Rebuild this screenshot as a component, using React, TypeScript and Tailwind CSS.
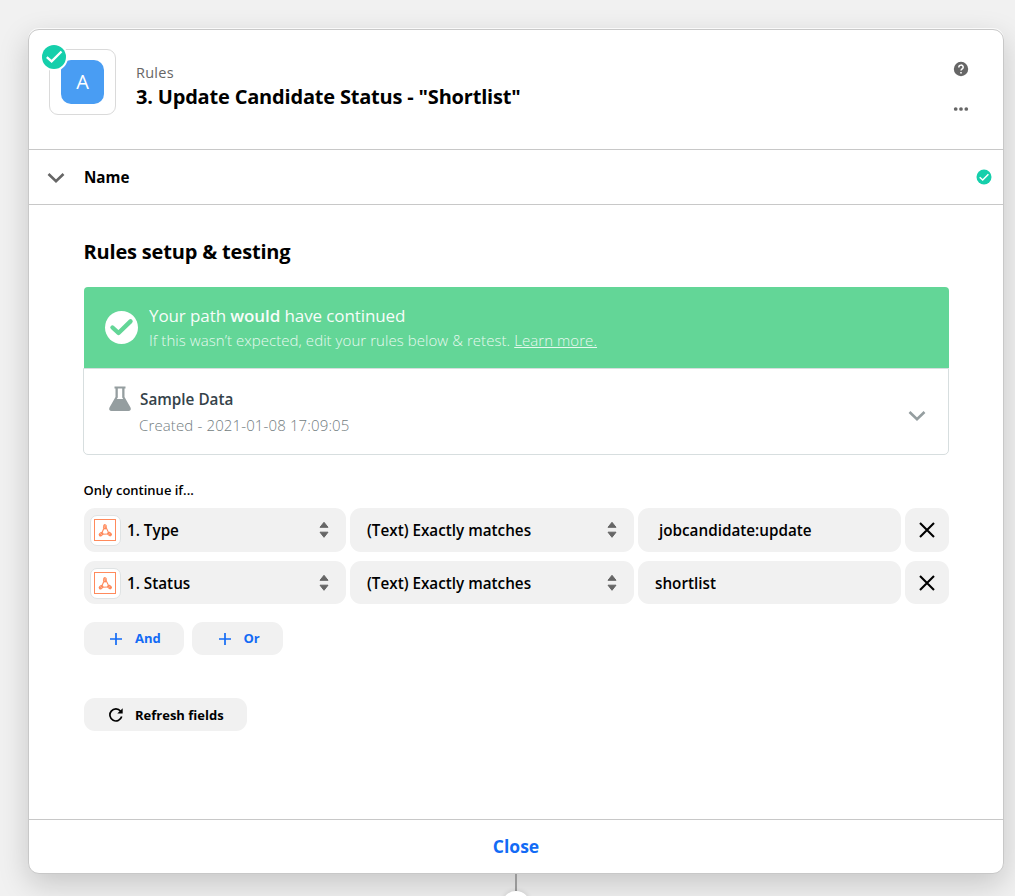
import React from "react";

function Chevron({ className }: { className: string }) {
  return (
    <svg viewBox="0 0 18 12" className={className} fill="none" stroke="currentColor" strokeWidth="2.6">
      <path d="M1.500 2 9 9.300 16.500 2" />
    </svg>
  );
}

function Sorter() {
  return (
    <svg viewBox="0 0 10 18" className="h-[18px] w-[10px] shrink-0" fill="#666" stroke="#666" strokeLinejoin="round">
      <path d="M5 1.300 9 6.300H1ZM1 11.200h8L5 16.300Z" />
    </svg>
  );
}

function AppIcon() {
  return (
    <span className="mt-[7px] flex h-[31px] w-[31px] shrink-0 items-center justify-center self-start rounded-[7px] border border-[#dfe3e4] bg-white">
      <svg viewBox="0 0 23 23" className="h-[23px] w-[23px]" fill="none" stroke="#ff8a5c">
        <rect x=".5" y=".5" width="21" height="21" strokeWidth="1" />
        <g strokeWidth="3.600" strokeLinecap="round">
          <path d="M11 6.900 10.700 8.600M6.500 15.700l1.200-1.100M14.900 14.500l1.300 1" />
        </g>
        <path d="M11.800 8 14.200 12.800M9.800 9.500 8.300 13M8.500 15.300 14 15" strokeWidth="1.100" />
        <path d="m9.500 7.900 2.300-1.700M9.700 9.200l2-1.500M6 14.300l2 1.600M14.300 15.900l1.800-1.600" stroke="#ffd0bb" strokeWidth=".6" />
      </svg>
    </span>
  );
}

function RemoveButton() {
  return (
    <button className="flex h-full w-11 items-center justify-center rounded-[11px] bg-[#f1f1f1]">
      <svg viewBox="0 0 16 16" className="h-4 w-4" stroke="#000" strokeWidth="2.100">
        <path d="m1 1 14 14M15 1 1 15" />
      </svg>
    </button>
  );
}

function Rule({ field, value, height, inset }: { field: string; value: string; height: string; inset: string }) {
  return (
    <div className={`flex w-[865px] gap-1 text-[16px] font-semibold ${height}`}>
      <div className="flex w-[262px] items-center rounded-[11px] bg-[#f1f1f1] pr-[17px] pl-[6px]">
        <AppIcon />
        <span className="ml-[6px] grow origin-left scale-x-[0.953]">{field}</span>
        <Sorter />
      </div>
      <div className="flex w-[284px] items-center rounded-[11px] bg-[#f1f1f1] pr-[17px] pl-[17px]">
        <span className="grow origin-left scale-x-[0.953]">(Text) Exactly matches</span>
        <Sorter />
      </div>
      <div className={`flex w-[263px] items-center rounded-[11px] bg-[#f1f1f1] ${inset}`}>
        <span className="origin-left scale-x-[0.953]">{value}</span>
      </div>
      <RemoveButton />
    </div>
  );
}

function AddButton({ label, width, inset }: { label: string; width: string; inset: string }) {
  return (
    <button className={`flex h-[33px] items-center rounded-[11px] bg-[#f1f1f1] text-[13px] font-bold text-[#136bf5] ${width} ${inset}`}>
      <svg viewBox="0 0 12 12" className="mr-[13px] h-3 w-3" stroke="currentColor" strokeWidth="1.700">
        <path d="M6 0v12M0 6h12" />
      </svg>
      {label}
    </button>
  );
}

export default function App() {
  return (
    <div className="flex h-[896px] w-[1015px] flex-col items-start overflow-hidden bg-[#f1f1f1] pt-[29px] pl-[28px] font-['Open_Sans',sans-serif] text-black">
      <div className="flex h-[845px] w-[976px] shrink-0 flex-col overflow-hidden rounded-[11px] border border-[#c8c8c8] bg-white shadow-[0_-1px_0_#fafafa,0_10px_30px_rgba(0,0,0,0.18)]">
        <header className="flex h-[120px] shrink-0 justify-between border-b border-[#c8c8c8] pt-[19px] pr-[34px] pl-5">
          <div className="flex">
            <div className="relative flex h-[66px] w-[67px] items-center justify-center rounded-[9px] border border-[#dadada]">
              <div className="mb-px flex h-[44px] w-[43px] items-center justify-center rounded-[10px] bg-[#499df3] text-[20px] font-medium text-white">A</div>
              <svg viewBox="0 0 28 28" className="absolute -top-[7px] -left-[10px] h-7 w-7" fill="none">
                <circle cx="14" cy="14" r="14" fill="#fff" />
                <circle cx="14" cy="14" r="12" fill="#15cfab" />
                <path d="m6.800 14.200 4.800 4.200L21.500 8.500" stroke="#fff" strokeWidth="2.300" />
              </svg>
            </div>
            <div className="ml-5 flex flex-col pt-[14px]">
              <span className="text-[14.500px] leading-5 tracking-[0.25px] text-[#666]">Rules</span>
              <h1 className="text-[20px] leading-7 font-bold tracking-[-0.19px]">3. Update Candidate Status - "Shortlist"</h1>
            </div>
          </div>
          <div className="flex flex-col items-center pt-3">
            <svg viewBox="0 0 16 16" className="h-4 w-4" fill="none">
              <circle cx="8" cy="8" r="7.200" fill="#666" />
              <path d="M5.800 6.400C5.800 3.400 10.200 3.400 10.200 6.200 10.200 7.800 8 7.900 8 9.600" stroke="#fff" strokeWidth="1.500" />
              <path d="M7.200 11h1.600v1.500H7.200z" fill="#fff" />
            </svg>
            <svg viewBox="0 0 16 6" className="mt-[29px] h-[6px] w-4" fill="#666">
              <circle cx="2.700" cy="3" r="1.850" /><circle cx="8" cy="3" r="1.850" /><circle cx="13.300" cy="3" r="1.850" />
            </svg>
          </div>
        </header>
        <section className="flex h-[55px] shrink-0 items-center border-b border-[#c8c8c8] pr-[11px] pl-[19px]">
          <Chevron className="-ml-px mt-px h-3 w-[18px] text-[#666]" />
          <h2 className="ml-[18.500px] grow origin-left scale-x-[0.95] text-[16px] font-bold">Name</h2>
          <svg viewBox="0 0 16 16" className="mb-px h-4 w-4" fill="none">
            <circle cx="8" cy="8" r="7.500" fill="#15cfab" />
            <path d="m3.700 8.200 3 2.800 5.700-5.700" stroke="#fff" strokeWidth="1.500" />
          </svg>
        </section>
        <main className="flex h-[614px] shrink-0 flex-col pt-8 pl-[54px]">
          <h2 className="ml-[0.500px] text-[20px] leading-[30px] font-bold tracking-[-0.18px]">Rules setup &amp; testing</h2>
          <div className="mt-5 ml-px flex h-[81px] w-[865px] shrink-0 rounded-t-[4px] bg-[#63d697]">
            <svg viewBox="0 0 34 34" className="mt-[23px] ml-5 h-[34px] w-[34px]" fill="none">
              <circle cx="17.500" cy="17.500" r="16.500" fill="#fff" />
              <path d="m8.500 17.500 6 5.500L26.500 11.300" stroke="#63d697" strokeWidth="4.400" strokeLinecap="round" strokeLinejoin="round" />
            </svg>
            <div className="ml-[11px] pt-4 text-white">
              <p className="text-[17px] leading-[26px] tracking-[-0.1px] opacity-95">Your path <span className="font-semibold">would</span> have continued</p>
              <p className="-mt-px text-[15px] leading-6 font-light tracking-[0.06px] opacity-85">If this wasn’t expected, edit your rules below &amp; retest. <a className="underline">Learn more.</a></p>
            </div>
          </div>
          <div className="flex h-[87px] w-[866px] shrink-0 rounded-b-[5px] border border-[#d7dedf] pl-6">
            <svg viewBox="0 0 24 26" className="mt-[17px] h-[26px] w-6" fill="#959ea0">
              <path fillRule="evenodd" d="M6.500.5h11v2h-1V11l6 10.500c1 2-.2 3.500-2 3.500h-17C1.700 25 .5 23.500 1.500 21.500l6-10.500V2.500h-1Zm3.300 2V11.500l-1 1.600h6.400l-1-1.600V2.500Z" />
            </svg>
            <div className="ml-[7px] grow pt-[18px]">
              <p className="ml-px origin-left scale-x-[0.955] text-[16px] leading-6 font-semibold text-[#354249]">Sample Data</p>
              <p className="mt-[2px] text-[15px] leading-6 font-light tracking-[0.13px] text-[#737d81]">Created - 2021-01-08 17:09:05</p>
            </div>
            <Chevron className="mt-[40.500px] mr-[22px] h-3 w-[18px] text-[#959ea0]" />
          </div>
          <p className="mt-[25px] ml-[0.500px] text-[13px] leading-5 font-semibold">Only continue if...</p>
          <div className="mt-2 ml-px flex flex-col gap-[9px]">
            <Rule field="1. Type" value="jobcandidate:update" height="h-[44px]" inset="pl-[21px]" />
            <Rule field="1. Status" value="shortlist" height="h-[43px]" inset="pl-[17px]" />
          </div>
          <div className="mt-[18px] ml-px flex gap-2">
            <AddButton label="And" width="w-[100px]" inset="pl-[26px]" />
            <AddButton label="Or" width="w-[91px]" inset="pl-[26.500px]" />
          </div>
          <button className="mt-[43px] ml-px flex h-[33px] w-[163px] items-center rounded-[11px] bg-[#f1f1f1] pt-[2px] pl-[25px] text-[13px] font-bold">
            <svg viewBox="0 0 14 14" className="mr-3 mb-[2px] h-[14px] w-[14px]" fill="none" stroke="#000" strokeWidth="1.700">
              <path d="M12.700 8.600A6 6 0 1 1 11.600 3.200" />
              <path d="M13.700.2v5.400H8.300Z" fill="#000" stroke="none" />
            </svg>
            Refresh fields
          </button>
        </main>
        <footer className="flex grow items-center justify-center border-t border-[#c8c8c8] text-[17.500px] font-bold text-[#136bf5]">Close</footer>
      </div>
      <div className="ml-[487px] h-[17px] w-[2px] shrink-0 bg-[#999]" />
      <div className="ml-[474px] h-7 w-7 shrink-0 rounded-full bg-white shadow-[0_0_5px_rgba(0,0,0,0.15)]" />
    </div>
  );
}
